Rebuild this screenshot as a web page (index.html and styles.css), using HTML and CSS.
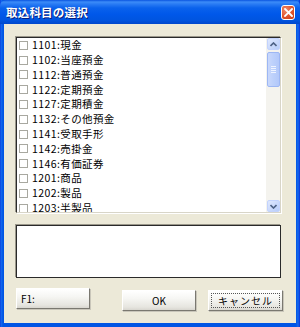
FILE: index.html
```html
<!DOCTYPE html>
<html lang="ja">
<head>
<meta charset="utf-8">
<title>取込科目の選択</title>
<link rel="stylesheet" href="styles.css">
</head>
<body>
<div class="window">
  <div class="titlebar">
    <span class="title">取込科目の選択</span>
    <span class="close"><svg width="9" height="9" viewBox="0 0 9 9"><path d="M1 1 L8 8 M8 1 L1 8" stroke="#fff" stroke-width="1.8" stroke-linecap="square"/></svg></span>
  </div>
  <div class="client">
    <div class="listbox">
      <ul class="items">
        <li class="item"><span class="cb"></span><span class="lbl">1101:現金</span></li>
        <li class="item"><span class="cb"></span><span class="lbl">1102:当座預金</span></li>
        <li class="item"><span class="cb"></span><span class="lbl">1112:普通預金</span></li>
        <li class="item"><span class="cb"></span><span class="lbl">1122:定期預金</span></li>
        <li class="item"><span class="cb"></span><span class="lbl">1127:定期積金</span></li>
        <li class="item"><span class="cb"></span><span class="lbl">1132:その他預金</span></li>
        <li class="item"><span class="cb"></span><span class="lbl">1141:受取手形</span></li>
        <li class="item"><span class="cb"></span><span class="lbl">1142:売掛金</span></li>
        <li class="item"><span class="cb"></span><span class="lbl">1146:有価証券</span></li>
        <li class="item"><span class="cb"></span><span class="lbl">1201:商品</span></li>
        <li class="item"><span class="cb"></span><span class="lbl">1202:製品</span></li>
        <li class="item"><span class="cb"></span><span class="lbl">1203:半製品</span></li>
      </ul>
      <div class="scrollbar">
        <div class="sbtn"><svg width="7" height="5" viewBox="0 0 7 5"><path d="M0.5 4 L3.5 1 L6.5 4" fill="none" stroke="#4d6185" stroke-width="1.6"/></svg></div>
        <div class="thumb"><span class="grip"></span><span class="grip"></span><span class="grip"></span><span class="grip"></span></div>
        <div class="track"></div>
        <div class="sbtn"><svg width="7" height="5" viewBox="0 0 7 5"><path d="M0.5 1 L3.5 4 L6.5 1" fill="none" stroke="#4d6185" stroke-width="1.6"/></svg></div>
      </div>
    </div>
    <div class="msgbox"></div>
    <div class="buttons">
      <button class="btn btn-f1">F1:</button>
      <button class="btn btn-ok">OK</button>
      <button class="btn btn-cancel"><span class="focus">キャンセル</span></button>
    </div>
  </div>
</div>
</body>
</html>
```

FILE: styles.css
```css
html, body {
  margin: 0;
  padding: 0;
  background: #ffffff;
}
.window {
  width: 300px;
  height: 327px;
  box-sizing: border-box;
  display: flex;
  flex-direction: column;
  background: linear-gradient(to right, #0831d9 0px, #166aee 1px, #0055e5 3px, #0055e5 296px, #166aee 298px, #0831d9 300px);
  padding: 0 4px 4px 4px;
  font-family: "Noto Sans CJK JP", sans-serif;
}
.titlebar {
  height: 24px;
  margin: 0 -4px;
  padding: 0 5px 0 6px;
  display: flex;
  align-items: center;
  justify-content: space-between;
  background: linear-gradient(to bottom, #0a55e0 0px, #3c8cf8 2px, #2a7cf4 4px, #0a62ec 8px, #0058ea 14px, #0055e0 20px, #0047cc 24px);
  border-radius: 6px 6px 0 0;
}
.title {
  color: #ffffff;
  font-size: 11.5px;
  font-weight: bold;
  letter-spacing: 0.2px;
  text-shadow: 1px 1px 0 #0a1e7a;
  line-height: 1;
  margin-top: 2px;
}
.close {
  width: 14px;
  height: 15px;
  box-sizing: border-box;
  border: 1px solid #ffffff;
  border-radius: 3px;
  background: radial-gradient(circle at 30% 30%, #f08a6a 0%, #e0542c 55%, #c83c18 100%);
  display: flex;
  align-items: center;
  justify-content: center;
  margin-top: 1px;
}
.client {
  flex: 1;
  background: #ece9d8;
  padding: 13px 13px 0 12px;
  display: flex;
  flex-direction: column;
}
.listbox {
  width: 265px;
  height: 176px;
  box-sizing: border-box;
  background: #ffffff;
  border-top: 1px solid #2a2a2a;
  border-left: 1px solid #2a2a2a;
  border-right: 1px solid #d8d5c8;
  border-bottom: 1px solid #d8d5c8;
  box-shadow: -1px -1px 0 #9a978a, 1px 1px 0 #ffffff;
  display: flex;
  overflow: hidden;
}
.items {
  list-style: none;
  margin: 0;
  padding: 0 0 0 2px;
  flex: 1;
}
.item {
  height: 14.8px;
  display: flex;
  align-items: center;
  font-size: 10.5px;
  color: #000000;
  white-space: nowrap;
}
.cb {
  width: 9px;
  height: 9px;
  box-sizing: border-box;
  border: 1px solid #a8a8a0;
  background: #ffffff;
  margin-right: 4px;
  flex: none;
}
.lbl {
  letter-spacing: 0.4px;
  line-height: 1;
}
.scrollbar {
  width: 13px;
  display: flex;
  flex-direction: column;
  background: #f4f3ee;
  border-left: 1px solid #f4f3ee;
}
.sbtn {
  height: 12px;
  flex: none;
  box-sizing: border-box;
  border: 1px solid #c3d3fd;
  border-radius: 2px;
  background: linear-gradient(to bottom right, #dfe8fe, #b8cdfa);
  display: flex;
  align-items: center;
  justify-content: center;
}
.thumb {
  margin-top: 2px;
  height: 35px;
  flex: none;
  box-sizing: border-box;
  border: 1px solid #9db7f4;
  border-radius: 2px;
  background: linear-gradient(to right, #c9d8fc, #bcd0fb 50%, #b2c8fa);
  display: flex;
  flex-direction: column;
  align-items: center;
  justify-content: center;
  gap: 1px;
}
.grip {
  width: 5px;
  height: 1px;
  background: #eef3ff;
}
.track {
  flex: 1;
}
.msgbox {
  width: 265px;
  height: 53px;
  box-sizing: border-box;
  margin-top: 12px;
  background: #ffffff;
  border: 1px solid #2a2a2a;
  box-shadow: -1px -1px 0 #9a978a;
}
.buttons {
  display: flex;
  margin-top: 12px;
  align-items: flex-start;
}
.btn {
  width: 74px;
  height: 21px;
  box-sizing: border-box;
  margin: 0;
  padding: 0;
  font-family: "Noto Sans CJK JP", sans-serif;
  font-size: 10px;
  color: #000000;
  background: linear-gradient(to bottom, #ffffff 0%, #f6f6f3 40%, #e6e5df 85%, #d8d6cf 100%);
  border-top: 1px solid #ffffff;
  border-left: 1px solid #ffffff;
  border-right: 1px solid #7a7870;
  border-bottom: 1px solid #7a7870;
  box-shadow: 1px 1px 0 #c9c6ba;
}
.btn-f1 {
  text-align: left;
  padding-left: 4px;
  margin-top: -2px;
}
.btn-ok {
  margin-left: 32px;
}
.btn-cancel {
  margin-left: 12px;
  width: 75px;
  padding: 2px;
}
.focus {
  display: flex;
  align-items: center;
  justify-content: center;
  height: 100%;
  box-sizing: border-box;
  border: 1px dotted #555555;
  letter-spacing: 1px;
}
```
